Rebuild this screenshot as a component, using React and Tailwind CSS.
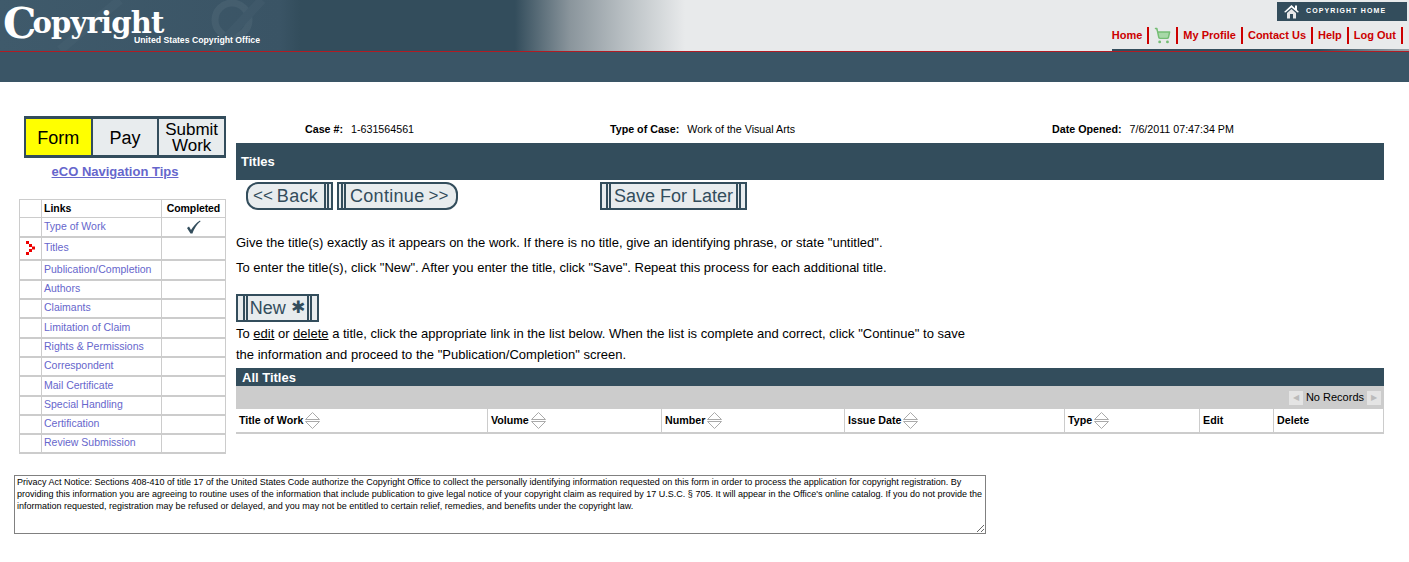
import { ShoppingCart } from "lucide-react";

const links = [
  ["Type of Work", "h-[19px]", true],
  ["Titles", "h-[23px]"],
  ["Publication/Completion", "h-[20px]"],
  ["Authors", "h-[19px]"],
  ["Claimants", "h-[19px]"],
  ["Limitation of Claim", "h-[20px]"],
  ["Rights & Permissions", "h-[19px]"],
  ["Correspondent", "h-[19px]"],
  ["Mail Certificate", "h-[20px]"],
  ["Special Handling", "h-[19px]"],
  ["Certification", "h-[19px]"],
  ["Review Submission", "h-[19px]"],
];

function Bars() {
  return <span className="shrink-0 self-stretch w-[5px] mx-[2px] border-x-2 border-[#334d5c]" />;
}

function Sorter() {
  return (
    <svg width="15" height="19" viewBox="0 0 15 19" className="ml-[2px] shrink-0">
      <path d="M0.5 8.5 L7.5 1.5 L14.5 8.5 Z M0.5 10.5 L7.5 17.5 L14.5 10.5 Z" fill="none" stroke="#aaa" strokeWidth="1" />
    </svg>
  );
}

function NavLink({ children }) {
  return <a className="text-[11px] font-bold text-[#cc0000] px-[5px] border-r-2 border-[#cc0000] h-[17px] leading-[17px] whitespace-nowrap">{children}</a>;
}

function Header() {
  return (
    <div>
      <div className="h-[51px] flex justify-between bg-[linear-gradient(90deg,#3f5a6b_0,#3a5465_280px,#334d5c_300px,#334d5c_515px,#8a959c_570px,#b5bcc0_620px,#e8eaeb_685px)]">
        <div className="relative pl-[3px] w-[300px] overflow-hidden">
          {/* faint statue behind the logo */}
          <svg width="300" height="51" className="absolute left-0 top-0 opacity-15">
            <circle cx="232" cy="20" r="17" fill="none" stroke="#7d93a0" strokeWidth="7" />
            <path d="M215 50 L262 0 M60 50 L120 0" stroke="#5b7484" strokeWidth="9" />
          </svg>
          <div className="relative flex items-start font-['DejaVu_Serif',serif] font-bold text-white leading-none">
            <span className="text-[42px] leading-[44px] mt-[2px]">C</span>
            <span className="text-[29px] leading-[30px] mt-[8px] -ml-[4px] tracking-[-0.8px]">opyright</span>
          </div>
          <div className="absolute left-[134px] top-[34px] text-[8.7px] font-bold text-white">United States Copyright Office</div>
        </div>
        <div className="flex flex-col items-end">
          <div className="mt-[2px] mr-[2px] w-[130px] h-[19px] bg-[#334d5c] flex items-center text-white text-[7px] font-bold tracking-[0.16em] pl-[7px] gap-[7px]">
            <svg width="15" height="15" viewBox="0 0 15 15">
              <path d="M0 8 L7.5 1 L11 4.2 V1.5 H13 V6 L15 8 L13.5 8.5 L7.5 3.5 L1.5 8.5 Z" fill="white" />
              <path d="M3 9 L7.5 5 L12 9 V14.5 H9 V10 H6 V14.5 H3 Z" fill="#e8e8e8" />
            </svg>
            <span>COPYRIGHT HOME</span>
          </div>
          <div className="mt-[6px] mr-[6px] flex items-center">
            <NavLink>Home</NavLink>
            <span className="px-[5px] border-r-2 border-[#cc0000] h-[17px] flex items-center -mt-[1px]">
              <ShoppingCart size={17} strokeWidth={2} fill="#a8d8a8" className="text-[#74bd74]" />
            </span>
            <NavLink>My Profile</NavLink>
            <NavLink>Contact Us</NavLink>
            <NavLink>Help</NavLink>
            <NavLink>Log Out</NavLink>
          </div>
          <div className="mt-auto h-[2px] w-[297px] bg-[linear-gradient(90deg,#334d5c_0,#334d5c_70%,#9aa4aa_100%)]" />
        </div>
      </div>
      <div className="h-[1px] bg-[#b01c24]" />
      <div className="h-[30px] bg-[#3a5566]" />
    </div>
  );
}

function Sidebar() {
  return (
    <div className="w-[207px] ml-[19px] shrink-0">
      <div className="ml-[5px] w-[202px] h-[42px] bg-[#334d5c] px-[2px] py-[3px] grid grid-cols-3 gap-[2px] text-black text-[18px] text-center">
        <div className="bg-[#ffff00] flex items-center justify-center pt-[2px]">Form</div>
        <div className="bg-[#e8ecee] flex items-center justify-center pt-[2px]">Pay</div>
        <div className="bg-[#e8ecee] flex items-center justify-center leading-[16px] text-[17px] pt-[1px]">Submit<br />Work</div>
      </div>
      <div className="ml-[5px] w-[182px] text-center mt-[5px] text-[13px] font-bold text-[#6666cc] underline leading-[17px]">eCO Navigation Tips</div>
      <table className="mt-[19px] w-[207px] table-fixed border-collapse text-[10.5px]">
        <tbody>
          <tr className="h-[18px]">
            <td className="w-[22px] border border-[#ccc]"></td>
            <td className="w-[120px] border border-[#ccc] pl-[2px] font-bold text-black">Links</td>
            <td className="border border-[#ccc] text-center font-bold text-black whitespace-nowrap tracking-[-0.1px]">Completed</td>
          </tr>
          {links.map(([label, height, done]) => (
            <tr key={label} className={height}>
              <td className="border border-b-2 border-[#ccc] pl-[6px]">
                {label === "Titles" && (
                  <svg width="10" height="14" viewBox="0 0 10 14" className="block">
                    <path d="M0 0h3v3H0zM3 3h3v3H3zM6 5.5h3v3H6zM3 8h3v3H3zM0 11h3v3H0z" fill="#ee0000" />
                  </svg>
                )}
              </td>
              <td className="border border-b-2 border-[#ccc] pl-[2px] text-[#6666cc]">{label}</td>
              <td className="border border-b-2 border-[#ccc]">
                {done && (
                  <svg width="15" height="14" viewBox="0 0 15 14" className="mx-auto block">
                    <path d="M1 8 L3 6.5 L5 10 C7 6.5 10 3 14 0.5 L14.5 1.5 C11 4 8 9 6.5 13.5 L4.5 13.5 Z" fill="#334d5c" />
                  </svg>
                )}
              </td>
            </tr>
          ))}
        </tbody>
      </table>
    </div>
  );
}

function TitleButton({ className, children }) {
  return (
    <div className={`h-[28px] border-2 border-[#334d5c] bg-[#e8ecee] text-[#334d5c] text-[18px] whitespace-nowrap flex items-center ${className}`}>
      {children}
    </div>
  );
}

function Main() {
  return (
    <div className="ml-[10px] w-[1148px] text-black">
      <div className="h-[27px] pt-[7px] flex text-[10.7px] leading-[13px]">
        <div className="w-[374px] pl-[69px]"><b className="mr-[8px]">Case #:</b>1-631564561</div>
        <div className="w-[442px]"><b className="mr-[8px]">Type of Case:</b>Work of the Visual Arts</div>
        <div><b className="mr-[8px]">Date Opened:</b>7/6/2011 07:47:34 PM</div>
      </div>
      <div className="h-[37px] bg-[#334d5c] text-white font-bold text-[13px] pl-[5px] leading-[38px]">Titles</div>
      <div className="mt-[2px] flex pl-[10px]">
        <TitleButton className="w-[87px] rounded-l-[12px] pl-[5px]"><span className="text-[17px] mr-[4px]">{"<<"}</span><span className="tracking-[0.3px]">Back</span><span className="ml-auto flex self-stretch"><Bars /></span></TitleButton>
        <TitleButton className="ml-[4px] w-[121px] rounded-r-[12px]"><Bars /><span className="ml-[2px] tracking-[0.3px]">Continue</span><span className="text-[17px] ml-[4px]">{">>"}</span></TitleButton>
        <TitleButton className="ml-[142px] w-[147px] justify-center"><Bars /><span className="mx-[1px]">Save For Later</span><Bars /></TitleButton>
      </div>
      <p className="mt-[26px] text-[13px] leading-[14px]">Give the title(s) exactly as it appears on the work. If there is no title, give an identifying phrase, or state "untitled".</p>
      <p className="mt-[11px] text-[13px] leading-[14px]">To enter the title(s), click "New". After you enter the title, click "Save". Repeat this process for each additional title.</p>
      <TitleButton className="mt-[19px] w-[83px] justify-center"><Bars />New<span className="ml-[5px] text-[17px] font-['DejaVu_Sans',sans-serif]">✱</span><Bars /></TitleButton>
      <p className="mt-[5px] text-[13px] leading-[14px]">To <u>edit</u> or <u>delete</u> a title, click the appropriate link in the list below. When the list is complete and correct, click "Continue" to save</p>
      <p className="mt-[7px] text-[13px] leading-[14px]">the information and proceed to the "Publication/Completion" screen.</p>
      <div className="mt-[6px] h-[18px] bg-[#334d5c] text-white font-bold text-[13px] pl-[6px] leading-[20px]">All Titles</div>
      <div className="h-[23px] bg-[#cccccc] flex items-center justify-end pr-[3px] text-[11px]">
        <span className="w-[14px] h-[14px] bg-[#e4e4e4] text-[#bbb] text-[8px] flex items-center justify-center">◀</span>
        <span className="mx-[3px]">No Records</span>
        <span className="w-[14px] h-[14px] bg-[#e4e4e4] text-[#bbb] text-[8px] flex items-center justify-center">▶</span>
      </div>
      <div className="h-[25px] border-b-2 border-[#ccc] flex text-[10.7px] font-bold">
        {[
          ["Title of Work", "w-[252px]", true],
          ["Volume", "w-[174px]", true],
          ["Number", "w-[183px]", true],
          ["Issue Date", "w-[220px]", true],
          ["Type", "w-[135px]", true],
          ["Edit", "w-[74px]"],
          ["Delete", "flex-1"],
        ].map(([label, width, sort]) => (
          <div key={label} className={`${width} flex items-center pl-[3px] border-r border-[#ccc]`}>
            {label}{sort && <Sorter />}
          </div>
        ))}
      </div>
    </div>
  );
}

export default function App() {
  return (
    <div className="w-[1409px] h-[562px] bg-white overflow-hidden font-['Liberation_Sans',sans-serif]">
      <Header />
      <div className="flex mt-[34px]">
        <Sidebar />
        <Main />
      </div>
      <textarea
        readOnly
        className="block mt-[21px] ml-[14px] w-[972px] h-[59px] border border-[#808080] px-[2px] py-0 text-[9px] leading-[12.4px] text-black outline-none"
        defaultValue={"Privacy Act Notice: Sections 408-410 of title 17 of the United States Code authorize the Copyright Office to collect the personally identifying information requested on this form in order to process the application for copyright registration. By providing this information you are agreeing to routine uses of the information that include publication to give legal notice of your copyright claim as required by 17 U.S.C. § 705. It will appear in the Office's online catalog. If you do not provide the information requested, registration may be refused or delayed, and you may not be entitled to certain relief, remedies, and benefits under the copyright law."}
      />
    </div>
  );
}
